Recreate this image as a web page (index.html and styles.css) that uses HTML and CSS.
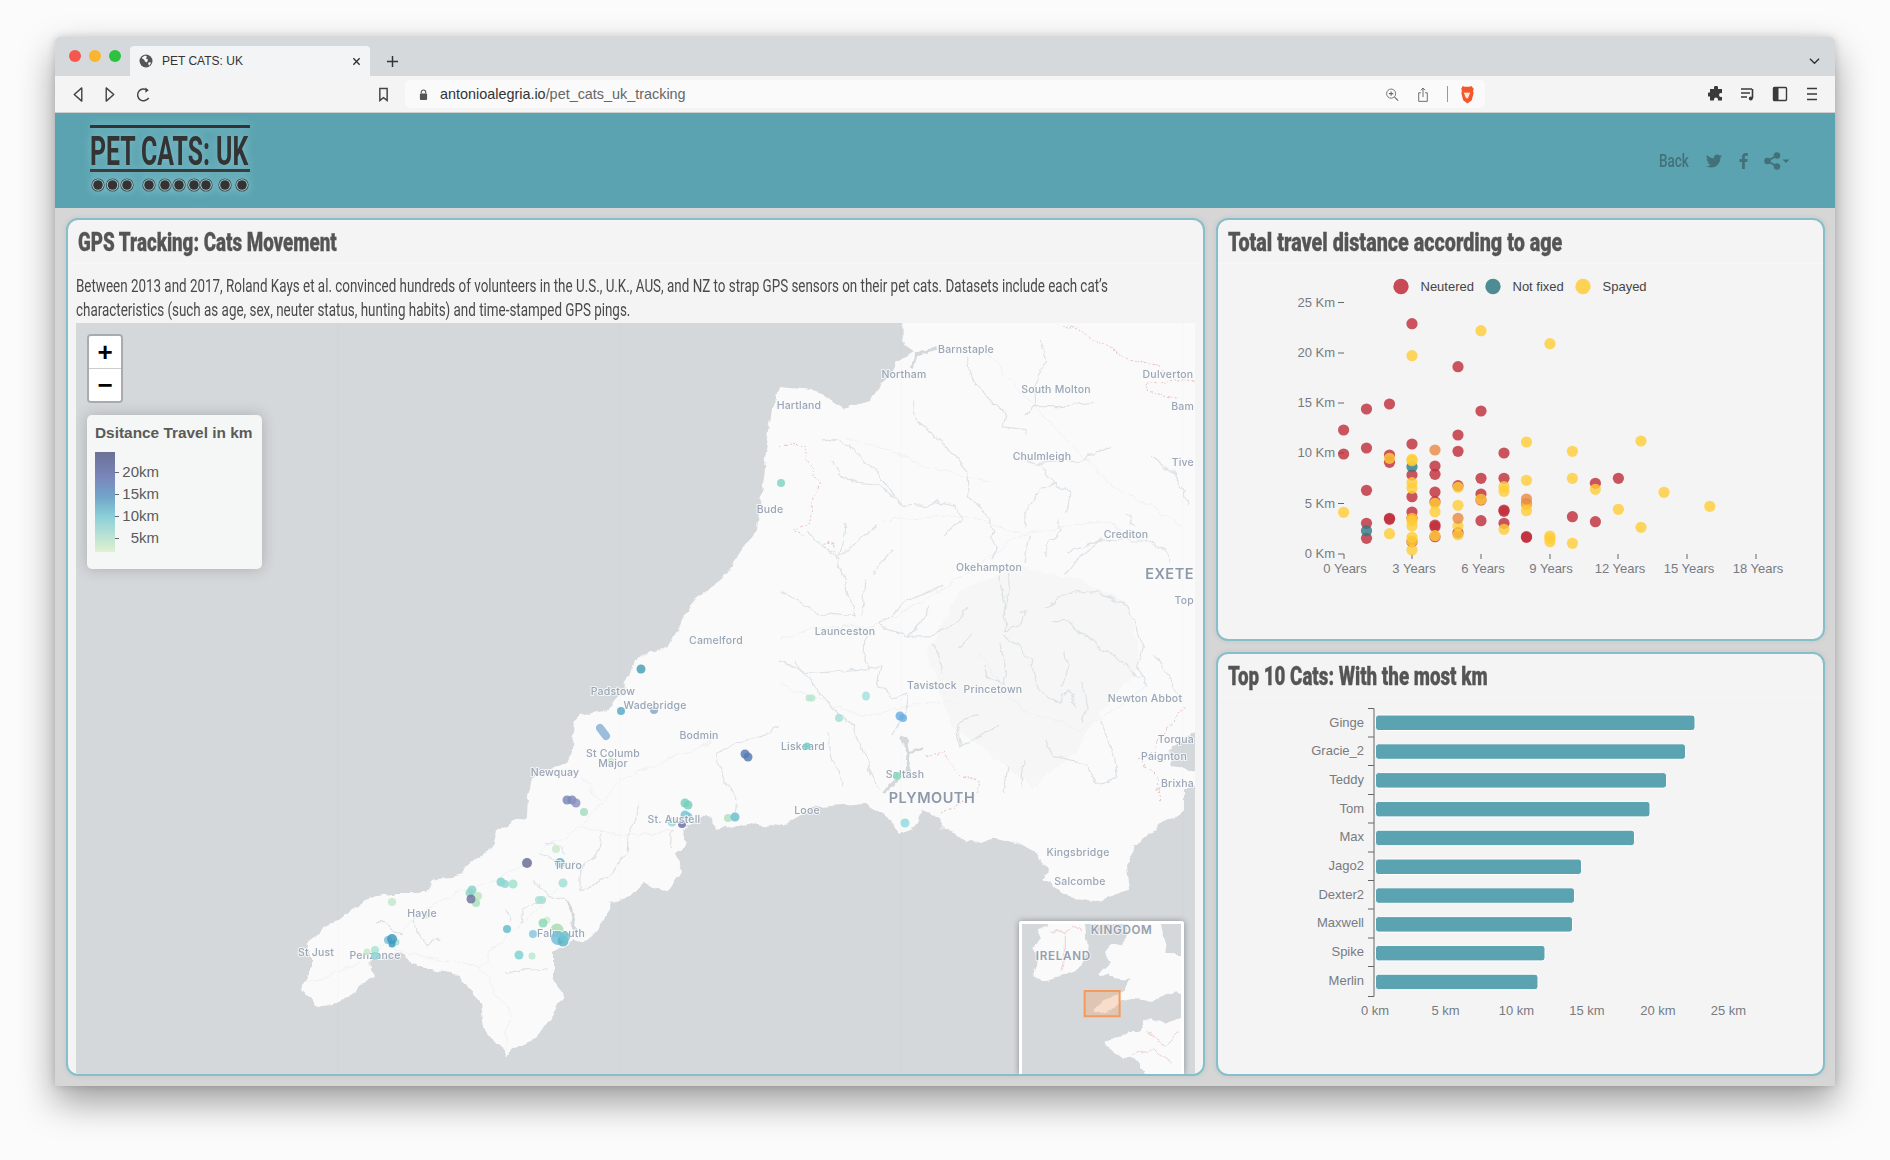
FILE: index.html
```html
<!DOCTYPE html>
<html lang="en">
<head>
    <meta charset="UTF-8">
    <title>PET CATS: UK</title>
    <link rel="stylesheet" href="styles.css">
</head>
<body>
<div class="window">
    <div class="tabbar">
        <div class="lights"><i class="red"></i><i class="amber"></i><i class="green"></i></div>
        <div class="tab">
            <svg class="globe" viewBox="0 0 14 14"><circle cx="7" cy="7" r="6.5" fill="#555"/><path d="M3 3.5l3-2 2 1-1 2 2 1-1 3-2-1-1-2-2-1zM9 9l2-1 1 1-2 3z" fill="#f3f4f5"/></svg>
            <span class="tab-title">PET CATS: UK</span>
            <svg class="tab-close" viewBox="0 0 10 10"><path d="M1.5 1.5l7 7M8.5 1.5l-7 7" stroke="#333" stroke-width="1.5"/></svg>
        </div>
        <svg class="tab-plus" viewBox="0 0 14 14"><path d="M7 1v12M1 7h12" stroke="#333" stroke-width="1.6"/></svg>
        <svg class="tab-list" viewBox="0 0 12 8"><path d="M1 1.5l5 5 5-5" fill="none" stroke="#333" stroke-width="1.5"/></svg>
    </div>
    <div class="toolbar">
        <div class="nav-btns">
            <svg viewBox="0 0 12 18"><path d="M10 2L2 9l8 7z" fill="none" stroke="#444" stroke-width="1.5" stroke-linejoin="round"/></svg>
            <svg viewBox="0 0 12 18"><path d="M2 2l8 7-8 7z" fill="none" stroke="#444" stroke-width="1.5" stroke-linejoin="round"/></svg>
            <svg viewBox="0 0 16 18"><path d="M13.5 12.5A6.3 6.3 0 1 1 12 4.5" fill="none" stroke="#444" stroke-width="1.6"/><path d="M10 1.5l3.5 3-3.5 2.5z" fill="#444"/></svg>
        </div>
        <svg class="bookmark" viewBox="0 0 12 16"><path d="M2 1.5h8v13l-4-3-4 3z" fill="none" stroke="#444" stroke-width="1.6"/></svg>
        <div class="urlbar">
            <svg class="lock" viewBox="0 0 10 12"><path d="M2.5 5V3.500a2.500 2.500 0 0 1 5 0V5" fill="none" stroke="#555" stroke-width="1.2"/><rect x="1" y="5" width="8" height="7" rx="1" fill="#555"/></svg>
            <span class="url"><b>antonioalegria.io</b>/pet_cats_uk_tracking</span>
            <svg class="url-icon" viewBox="0 0 16 16"><circle cx="7" cy="7" r="5.2" fill="none" stroke="#666" stroke-width="1"/><path d="M11 11l4 4" stroke="#666" stroke-width="1.2"/><path d="M7 4.500v5M4.500 7h5" stroke="#666" stroke-width="1.2"/></svg>
            <svg class="url-icon share" viewBox="0 0 14 18"><path d="M2 7h2.500M9.500 7H12v10H2V7" fill="none" stroke="#666" stroke-width="1.1"/><path d="M7 12V1.500M4.500 4L7 1.500 9.500 4" fill="none" stroke="#666" stroke-width="1.1"/></svg>
            <span class="url-sep"></span>
            <svg class="brave" viewBox="0 0 16 20"><path d="M3.500 1l2 .8h5l2-.8 2.500 3-.6 3 .6 1.500-2 7.500-4.500 3.500-4.500-3.500-2-7.500.6-1.500-.6-3z" fill="#f1592a"/><path d="M4.500 7.500l2.300.8L8 7.500l1.200.8 2.300-.8-1.500 4-1 2.500H7l-1-2.500z" fill="#fff" opacity=".85"/></svg>
        </div>
        <div class="tool-icons">
            <svg viewBox="0 0 16 16"><path d="M6 1.500a2 2 0 0 1 4 .5v1h4v4h-1a2 2 0 0 0 0 4h1v3.500H10v-1a2 2 0 0 0-4 0v1H2v-4H1a2 2 0 0 1 0-4h1V3h4z" fill="#3a3a3a"/></svg>
            <svg viewBox="0 0 16 16"><path d="M1 3h11M1 7h9M1 11h6" stroke="#3a3a3a" stroke-width="1.4"/><path d="M12.500 3v9" stroke="#3a3a3a" stroke-width="1.6"/><circle cx="10.800" cy="12.500" r="2" fill="#3a3a3a"/></svg>
            <svg viewBox="0 0 16 16"><rect x="1.500" y="1.500" width="13" height="13" rx="1" fill="none" stroke="#3a3a3a" stroke-width="1.4"/><rect x="1.500" y="1.500" width="5" height="13" fill="#3a3a3a"/></svg>
            <svg viewBox="0 0 16 16"><path d="M3 2.500h10M3 8h10M3 13.500h10" stroke="#3a3a3a" stroke-width="1.5"/></svg>
        </div>
    </div>

    <header class="site-head">
        <div class="logo">
            <div class="logo-name"><span>PET CATS: UK</span></div>
            <svg class="logo-dots" viewBox="0 0 160 16">
                <defs>
                    <g id="paw"><circle r="6.600" fill="#39484c"/><circle r="5.800" fill="#a9cfd5"/><circle r="4.800" fill="#333"/></g>
                </defs>
                <use href="#paw" x="8" y="8"/><use href="#paw" x="22.500" y="8"/><use href="#paw" x="37" y="8"/>
                <use href="#paw" x="59" y="8"/><use href="#paw" x="75" y="8"/><use href="#paw" x="89" y="8"/><use href="#paw" x="104" y="8"/><use href="#paw" x="116" y="8"/>
                <use href="#paw" x="135" y="8"/><use href="#paw" x="152" y="8"/>
            </svg>
        </div>
        <nav class="head-nav">
            <a class="back"><span>Back</span></a>
            <svg class="twitter" viewBox="0 0 24 24"><path d="M23.954 4.569c-.885.389-1.83.654-2.825.775 1.014-.611 1.794-1.574 2.163-2.723-.951.555-2.005.959-3.127 1.184-.896-.959-2.173-1.559-3.591-1.559-2.717 0-4.92 2.203-4.92 4.917 0 .39.045.765.127 1.124C7.691 8.094 4.066 6.13 1.64 3.161c-.427.722-.666 1.561-.666 2.475 0 1.71.87 3.213 2.188 4.096-.807-.026-1.566-.248-2.228-.616v.061c0 2.385 1.693 4.374 3.946 4.827-.413.111-.849.171-1.296.171-.314 0-.615-.03-.916-.086.631 1.953 2.445 3.377 4.604 3.417-1.68 1.319-3.809 2.105-6.102 2.105-.39 0-.779-.023-1.17-.067 2.189 1.394 4.768 2.209 7.557 2.209 9.054 0 13.999-7.496 13.999-13.986 0-.209 0-.42-.015-.63.961-.689 1.8-1.56 2.46-2.548l-.047-.02z"/></svg>
            <svg class="facebook" viewBox="0 0 10 18"><path d="M6.500 18V10h2.700l.5-3.200H6.500V4.800c0-.9.3-1.600 1.600-1.600H10V.3C9.600.2 8.600 0 7.500 0 5 0 3.300 1.500 3.300 4.300v2.500H.5V10h2.800v8z"/></svg>
            <svg class="share-menu" viewBox="0 0 26 18"><circle cx="3.500" cy="9" r="3.300"/><circle cx="13" cy="3.500" r="3.300"/><circle cx="13" cy="14.500" r="3.300"/><path d="M3.500 9L13 3.500M3.500 9L13 14.500" stroke="#42717a" stroke-width="2"/><path d="M18.500 7.500h7l-3.500 3.500z"/></svg>
        </nav>
    </header>

    <main class="dash">
        <section class="card card-map">
            <h2 class="card-title"><span>GPS Tracking: Cats Movement</span></h2>
            <p class="intro">
                <span>Between 2013 and 2017, Roland Kays et al. convinced hundreds of volunteers in the U.S., U.K., AUS, and NZ to strap GPS sensors on their pet cats. Datasets include each cat’s</span>
                <span>characteristics (such as age, sex, neuter status, hunting habits) and time-stamped GPS pings.</span>
            </p>
            <div class="map">
                <svg class="map-svg" viewBox="76 323 1119 752">
                    <defs>
                        <filter id="rough" color-interpolation-filters="sRGB">
                            <feTurbulence type="fractalNoise" baseFrequency=".07" numOctaves="3" seed="4"/>
                            <feDisplacementMap in="SourceGraphic" scale="9" xChannelSelector="R" yChannelSelector="G"/>
                        </filter>
                    </defs>
                    <rect class="sea" x="76" y="323" width="1119" height="752"/>
                    <path class="land" filter="url(#rough)" d="M900 300L902 340 913 352 897 362 882 383 870 400 843 407 823 395 813 390 780 387 772 410 765 458 757 530 723 579 690 605 669 645 633 660 623 693 603 711 580 716 575 720 573 747 567 763 532 777 528 797 527 815 497 830 493 847 477 860 462 873 433 880 427 893 397 893 370 897 340 920 320 927 310 943 310 973 302 988 317 1007 337 1003 360 987 375 977 368 965 373 960 400 953 420 967 450 972 467 983 480 1003 483 1027 500 1047 507 1055 513 1050 537 1037 563 997 553 977 553 953 573 940 583 942 597 933 610 902 630 897 643 883 668 892 682 870 677 853 687 843 683 830 707 813 717 830 747 823 780 827 813 808 863 803 887 817 900 833 913 828 923 810 940 817 943 830 967 840 980 843 997 838 1013 842 1037 855 1047 870 1043 880 1070 897 1100 902 1130 890 1127 867 1133 847 1163 823 1183 810 1183 790 1215 782 1215 772 1168 766 1172 750 1190 735 1215 720 1215 300z"/>
                    <g class="seams"><path d="M338 323V1075M620 323V1075M901 323V1075M1183 323V1075"/></g>

                    <g filter="url(#rough)">
                        <g transform="translate(780 320) scale(.3333)">
                            <path class="moor" d="M540 810L720 740 900 780 1040 850 1070 960 1080 1040 960 1180 880 1300 760 1400 660 1330 520 1220 440 1000z"/>
                            <path class="road" d="M0 960L100 925 300 920 560 760 720 640 760 640 960 600 1170 700M600 1000L720 1170 900 1230 1100 1100M0 1090L250 1190 430 1150 530 1150M620 100L800 300 1000 500 1210 620M300 600L560 590 720 640M200 350L420 430 620 490"/>
                            <path class="river" d="M400 240L395 270 420 310 460 340 500 380 530 410 560 450 565 530 610 570 640 630 645 680 630 720M130 355L210 375 240 410 290 450 340 530 380 555 440 560 470 545 530 555 545 600 490 650M155 420L175 465 240 490 290 495 340 530M570 150L580 190 640 250 680 290 670 320 740 330 745 345M740 285L760 260 840 260 940 250M560 110L575 170M780 60L800 120 760 190 765 260M780 430L820 490 870 520 860 580M830 490L780 510 735 580 735 620M840 600L840 630 795 680 795 710M745 645L735 730M860 700L950 665 1010 660 1100 660 1160 690 1170 730M955 665L890 720 860 760M700 410L780 430 900 420 960 395 990 385M85 640L165 710 190 770 215 860 225 890 115 880 0 810M195 610L190 670 170 710 290 620M335 690L280 760M255 780L245 880M490 795L370 850 300 920 385 945 450 945 525 910 575 855M455 855L430 900 385 945M0 1020L80 1060 180 1055 260 1050 300 1035 290 1090 340 1130 380 1120 370 1190 345 1240M258 940L255 1030 270 1050M720 875L740 870 720 910 680 930 670 880 660 770M690 760L670 870M795 860L850 825 950 815 1040 860 1060 900 1090 980 1075 1040 1100 1100M820 905L860 905 940 970 1000 1005 1080 1070M675 940L750 1020 775 1110 840 1150 860 1110 890 1160M855 990L860 1050 845 1100M905 1085L925 1160 900 1210M660 970L675 1040 670 1090M612 1035L620 1065 675 1090M580 935L540 990M460 970L490 1040 480 1060M1040 580L1060 620M1110 405L1180 460 1210 510 1225 560M530 1240L540 1280 660 1215M545 1280L530 1210 590 1190M795 1260L820 1310 920 1330 950 1390 1010 1380 1000 1300 960 1200M40 1020L130 1130 220 1220 270 1350 300 1410M140 1240L160 1330 190 1400M680 1340L670 1420M730 1320L720 1400M1120 1000L1200 1130"/>
                            <path class="river-wide" d="M470 85L410 105 400 140M360 1250L390 1300 430 1280M390 1300L385 1350 310 1420"/>
                            <path class="border" d="M850 10L960 70 1060 130 1115 135 1240 180M1240 180L1100 190 1095 220 1200 235M0 380L75 375 80 420 120 490 100 530 85 610 40 630 80 650M130 670L160 665 165 700 130 680M1215 1160L1120 1280 1080 1320 1130 1370 1140 1450M440 1310L490 1300 530 1360 600 1390 590 1420 520 1460 480 1480"/>
                        </g>
                        <g transform="translate(280 720) scale(.3333)">
                            <path class="road" d="M70 790L220 740 360 640 470 545 560 510 680 465 830 360 900 320 1020 180 1200 100 1300 60M350 690L480 720 600 745 650 680 780 560 830 500M600 745L690 880 680 990M900 320L1040 350 1180 330M900 170L960 240"/>
                            <path class="river" d="M290 605L320 605 365 650M405 590L410 630 440 675 485 660M800 370L840 375 860 400M780 400L820 420 905 440M970 330L960 390 915 430 900 470 900 510M1045 350L1040 400 990 470 900 510M1080 250L1050 330 1040 400M760 485L810 525 860 545M720 610L730 565 800 535M675 570L690 600M1365 230L1360 280M1365 230L1335 180 1310 100 1400 60 1500 20M1180 330L1170 380M680 760L740 745 800 750"/>
                            <path class="river-wide" d="M860 545L885 590 880 630"/>
                        </g>
                    </g>

                    <g class="dots">
                        <path d="M600 728L606 736" stroke="#8bb3d6" stroke-width="8" stroke-linecap="round" fill="none"/>
                        <circle cx="781" cy="483" r="4" fill="#84d4c4"/>
                        <circle cx="641" cy="669" r="4.500" fill="#4aa0b8"/>
                        <circle cx="621" cy="711" r="4" fill="#5aacc8"/>
                        <circle cx="654" cy="710" r="4" fill="#88a8cc"/>
                        <circle cx="611" cy="762" r="4" fill="#c8e6c8"/>
                        <circle cx="745" cy="754" r="4.500" fill="#5b7cb4"/><circle cx="748" cy="757" r="4.500" fill="#5b7cb4"/>
                        <circle cx="567" cy="800" r="4.500" fill="#7d8ab8"/><circle cx="572" cy="800" r="4.500" fill="#7d8ab8"/><circle cx="576" cy="803" r="4.500" fill="#8d92c4"/>
                        <circle cx="584" cy="812" r="4" fill="#a5dcc4"/>
                        <circle cx="685" cy="803" r="4.500" fill="#79d0c0"/><circle cx="688" cy="805" r="4.500" fill="#79d0c0"/>
                        <circle cx="685" cy="815" r="4.500" fill="#78c4d8"/><circle cx="688" cy="817" r="4.500" fill="#78c4d8"/>
                        <circle cx="672" cy="822" r="4.500" fill="#9ad8d8"/>
                        <circle cx="682" cy="824" r="4" fill="#6f72a8"/>
                        <circle cx="728" cy="818" r="4" fill="#b0e0c0"/><circle cx="735" cy="817" r="4.500" fill="#6cc0d0"/>
                        <circle cx="556" cy="849" r="4" fill="#cbe9cb"/>
                        <circle cx="527" cy="863" r="5" fill="#6a6f98"/>
                        <circle cx="560" cy="863" r="5" fill="#5eb8d4"/>
                        <circle cx="563" cy="883" r="4.500" fill="#a5dfd8"/>
                        <circle cx="501" cy="882" r="4.500" fill="#82d2cc"/><circle cx="505" cy="884" r="4" fill="#90d8d0"/><circle cx="513" cy="884" r="4.500" fill="#a5e0d0"/>
                        <circle cx="472" cy="890" r="4.500" fill="#8ad2d0"/><circle cx="470" cy="893" r="4.500" fill="#90d4c8"/><circle cx="478" cy="896" r="4" fill="#c0e6c0"/><circle cx="476" cy="903" r="4" fill="#a8e0c0"/><circle cx="471" cy="899" r="4.500" fill="#72749e"/>
                        <circle cx="539" cy="900" r="4" fill="#a8e0d4"/><circle cx="542" cy="900" r="4" fill="#a8e0d4"/>
                        <circle cx="392" cy="902" r="4" fill="#c4e8c8"/>
                        <circle cx="427" cy="915" r="3.500" fill="#c8e8c8"/>
                        <circle cx="547" cy="920" r="3.500" fill="#cfeecf"/><circle cx="543" cy="923" r="4.500" fill="#8fd8b8"/>
                        <circle cx="507" cy="929" r="4" fill="#68bccc"/>
                        <circle cx="533" cy="934" r="4" fill="#86c8e0"/>
                        <circle cx="557" cy="930" r="6.500" fill="#a8dcb0"/>
                    </g>

                    <g class="places">
                        <text x="966" y="353">Barnstaple</text><text x="904" y="378">Northam</text><text x="1056" y="393">South Molton</text><text x="1168" y="378">Dulverton</text><text class="edge" x="1194" y="410">Bam</text>
                        <text x="799" y="409">Hartland</text><text x="770" y="513">Bude</text><text x="1042" y="460">Chulmleigh</text><text class="edge" x="1194" y="466">Tive</text><text x="1126" y="538">Crediton</text>
                        <text x="989" y="571">Okehampton</text><text x="845" y="635">Launceston</text><text x="716" y="644">Camelford</text><text x="932" y="689">Tavistock</text><text x="993" y="693">Princetown</text>
                        <text x="1145" y="702">Newton Abbot</text><text class="edge" x="1194" y="743">Torqua</text><text x="1164" y="760">Paignton</text><text class="edge" x="1194" y="787">Brixha</text><text class="edge" x="1194" y="604">Top</text>
                        <text x="803" y="750">Liskeard</text><text x="905" y="778">Saltash</text><text x="807" y="814">Looe</text><text x="1078" y="856">Kingsbridge</text><text x="1080" y="885">Salcombe</text>
                        <text x="613" y="695">Padstow</text><text x="655" y="709">Wadebridge</text><text x="699" y="739">Bodmin</text><text x="613" y="757">St Columb</text><text x="613" y="767">Major</text>
                        <text x="555" y="776">Newquay</text><text x="674" y="823">St. Austell</text><text x="568" y="869">Truro</text><text x="422" y="917">Hayle</text><text x="561" y="937">Falmouth</text><text x="316" y="956">St Just</text><text x="375" y="959">Penzance</text>
                        <text class="city edge" x="1194" y="579">EXETE</text><text class="city" x="932" y="803">PLYMOUTH</text>
                    </g>

                    <g class="dots">
                        <circle cx="558" cy="938" r="7" fill="#70c0d8"/><circle cx="563" cy="941" r="5.500" fill="#5fb4c8"/><circle cx="565" cy="937" r="5" fill="#70c4d0"/>
                        <circle cx="388" cy="940" r="4" fill="#80c0d8"/><circle cx="396" cy="942" r="3.500" fill="#a0e0d0"/><circle cx="392" cy="944" r="3.500" fill="#3f9ac0"/><circle cx="392" cy="939" r="5" fill="#3f9ac0"/>
                        <circle cx="519" cy="955" r="4.500" fill="#7fd4d4"/>
                        <circle cx="532" cy="956" r="3.500" fill="#b8e8d0"/>
                        <circle cx="367" cy="952" r="3.500" fill="#c8e8c8"/><circle cx="375" cy="950" r="4" fill="#a8e4d4"/><circle cx="375" cy="956" r="4" fill="#90d4d8"/>
                        <circle cx="809" cy="698" r="3.500" fill="#b8e8d0"/><circle cx="812" cy="698" r="3.500" fill="#b8e8d0"/>
                        <ellipse cx="866" cy="696" rx="4" ry="4.500" fill="#a5e0e0"/>
                        <circle cx="839" cy="718" r="4" fill="#a5dfd8"/>
                        <circle cx="900" cy="716" r="4.500" fill="#6fb0e0"/><circle cx="903" cy="718" r="4" fill="#6fb0e0"/>
                        <circle cx="807" cy="746" r="3.500" fill="#70d0c8"/>
                        <circle cx="897" cy="776" r="4" fill="#88dcc0"/>
                        <circle cx="905" cy="823" r="4.500" fill="#90dce0"/>
                    </g>
                </svg>

                <div class="zoom-ctl"><a>+</a><a>−</a></div>

                <div class="map-legend">
                    <div class="map-legend-title">Dsitance Travel in km</div>
                    <div class="map-legend-body">
                        <div class="ramp"></div>
                        <ul class="ramp-labels">
                            <li>20km</li><li>15km</li><li>10km</li><li>5km</li>
                        </ul>
                    </div>
                </div>

                <div class="inset">
                    <svg viewBox="1022 925 159 151">
                        <rect class="sea" x="1022" y="925" width="159" height="151"/>
                        <g filter="url(#rough)">
                            <g transform="translate(780 800) scale(.3333)">
                                <path class="land" d="M1040 360L1140 360 1150 420 1160 465 1230 465 1230 575 1160 590 1110 605 1060 600 1025 605 1000 630 960 640 940 638 970 610 1020 575 1050 545 1000 540 955 525 990 490 975 460 990 440 1025 440 1040 410z"/>
                                <path class="land" d="M770 395L830 360 915 360 920 440 915 490 880 520 830 540 790 550 760 525 770 480 760 450 780 420z"/>
                                <path class="land" d="M970 725L1030 710 1090 700 1085 665 1110 660 1150 675 1230 640 1230 850 1120 850 1060 780 1000 760z"/>
                                <path class="border thin" d="M810 390L850 400 880 385 905 400M850 400L850 470 840 520M1100 700L1160 740 1200 700M1060 770L1120 750 1180 790"/>
                            </g>
                        </g>
                        <g transform="translate(780 800) scale(.3333)">
                            <text class="inset-label" x="850" y="482">IRELAND</text>
                            <text class="inset-label" x="1025" y="405">KINGDOM</text>
                            <rect class="view-box" x="914" y="576" width="105" height="76"/>
                        </g>
                    </svg>
                </div>
            </div>
        </section>

        <div class="side">
            <section class="card">
                <h2 class="card-title title-long"><span>Total travel distance according to age</span></h2>
                <svg class="chart" viewBox="1218 264 605 375">
                    <g class="legend">
                        <circle class="n" cx="1401" cy="286.500" r="7.700"/><text x="1420.500" y="291">Neutered</text>
                        <circle class="f" cx="1493" cy="286.500" r="7.700"/><text x="1512.500" y="291">Not fixed</text>
                        <circle class="s" cx="1583" cy="286.500" r="7.700"/><text x="1602.500" y="291">Spayed</text>
                    </g>
                    <g class="y-labels">
                        <text x="1335" y="307">25 Km</text><text x="1335" y="357">20 Km</text><text x="1335" y="407">15 Km</text>
                        <text x="1335" y="457">10 Km</text><text x="1335" y="508">5 Km</text><text x="1335" y="558">0 Km</text>
                    </g>
                    <path class="ticks" d="M1338 302.500H1344M1338 353H1344M1338 403H1344M1338 453H1344M1338 503.500H1344M1338 554H1344V559M1412 554V559M1481 554V559M1550 554V559M1618 554V559M1687 554V559M1756 554V559"/>
                    <g class="x-labels">
                        <text x="1345" y="572.500">0 Years</text><text x="1414" y="572.500">3 Years</text><text x="1483" y="572.500">6 Years</text><text x="1551" y="572.500">9 Years</text>
                        <text x="1620" y="572.500">12 Years</text><text x="1689" y="572.500">15 Years</text><text x="1758" y="572.500">18 Years</text>
                    </g>
                    <g class="pts n">
                        <circle cx="1343.600" cy="430"/><circle cx="1343.600" cy="454"/>
                        <circle cx="1366.500" cy="409"/><circle cx="1366.500" cy="448"/><circle cx="1366.500" cy="490.300"/><circle cx="1366.500" cy="523.300"/><circle cx="1366.500" cy="538.300"/>
                        <circle cx="1389.500" cy="404"/><circle cx="1389.500" cy="455"/><circle cx="1389.500" cy="462.300"/><circle cx="1389.500" cy="518.300"/><circle cx="1389.500" cy="519.300"/>
                        <circle cx="1412" cy="323.700"/><circle cx="1412" cy="444"/><circle cx="1412" cy="475"/><circle cx="1412" cy="496.700"/><circle cx="1412" cy="512"/><circle cx="1412" cy="518.300"/><circle cx="1412" cy="541.700"/>
                        <circle cx="1435" cy="466"/><circle cx="1435" cy="474.300"/><circle cx="1435" cy="492"/><circle cx="1435" cy="501.700"/><circle cx="1435" cy="525"/><circle cx="1435" cy="526.700"/><circle cx="1435" cy="536.700"/>
                        <circle cx="1458" cy="366.700"/><circle cx="1458" cy="435"/><circle cx="1458" cy="451.300"/><circle cx="1458" cy="485.700"/><circle cx="1458" cy="532.700"/>
                        <circle cx="1481" cy="411"/><circle cx="1481" cy="478.300"/><circle cx="1481" cy="494"/><circle cx="1481" cy="500"/><circle cx="1481" cy="520.700"/>
                        <circle cx="1504" cy="453"/><circle cx="1504" cy="478.300"/><circle cx="1504" cy="510"/><circle cx="1504" cy="511.300"/><circle cx="1504" cy="523.300"/>
                        <circle cx="1526.500" cy="504"/><circle cx="1526.500" cy="536.700"/><circle cx="1526.500" cy="537.300"/>
                        <circle cx="1572.400" cy="516.700"/>
                        <circle cx="1595.400" cy="483.300"/><circle cx="1595.400" cy="521.700"/>
                        <circle cx="1618.400" cy="478.300"/>
                    </g>
                    <g class="pts f">
                        <circle cx="1366.500" cy="530.700"/><circle cx="1412" cy="466.700"/>
                    </g>
                    <g class="pts s">
                        <circle cx="1343.600" cy="512.300"/>
                        <circle cx="1389.500" cy="458.300"/><circle cx="1389.500" cy="533.700"/>
                        <circle cx="1412" cy="355.700"/><circle cx="1412" cy="459.300"/><circle cx="1412" cy="460.700"/><circle cx="1412" cy="482.700"/><circle cx="1412" cy="488.300"/><circle cx="1412" cy="518.300"/><circle cx="1412" cy="520.700"/><circle cx="1412" cy="526"/><circle cx="1412" cy="537.300"/><circle cx="1412" cy="541"/><circle cx="1412" cy="550"/>
                        <circle cx="1435" cy="503.300"/><circle cx="1435" cy="511.700"/><circle cx="1435" cy="535.700"/>
                        <circle cx="1458" cy="487.300"/><circle cx="1458" cy="505.300"/><circle cx="1458" cy="526"/><circle cx="1458" cy="534.700"/>
                        <circle cx="1481" cy="330.700"/><circle cx="1481" cy="499.300"/>
                        <circle cx="1504" cy="486.700"/><circle cx="1504" cy="491.300"/><circle cx="1504" cy="529.300"/>
                        <circle cx="1526.500" cy="442"/><circle cx="1526.500" cy="480.300"/><circle cx="1526.500" cy="505"/><circle cx="1526.500" cy="510.700"/>
                        <circle cx="1549.900" cy="343.700"/><circle cx="1549.900" cy="536"/><circle cx="1549.900" cy="538.300"/><circle cx="1549.900" cy="541.700"/>
                        <circle cx="1572.400" cy="451.300"/><circle cx="1572.400" cy="478.300"/><circle cx="1572.400" cy="543.300"/>
                        <circle cx="1595.400" cy="489.300"/>
                        <circle cx="1618.400" cy="509.300"/>
                        <circle cx="1641" cy="441"/><circle cx="1641" cy="527.300"/>
                        <circle cx="1664" cy="492.300"/>
                        <circle cx="1709.800" cy="506.300"/>
                    </g>
                    <g class="pts o">
                        <circle cx="1435" cy="450"/><circle cx="1458" cy="518.300"/><circle cx="1526.500" cy="499"/>
                    </g>
                </svg>
            </section>

            <section class="card">
                <h2 class="card-title"><span>Top 10 Cats: With the most km</span></h2>
                <svg class="chart" viewBox="1218 698 605 376">
                    <path class="ticks" d="M1368 708.500H1374V996.500H1368M1368 737H1374M1368 765.500H1374M1368 794.500H1374M1368 823H1374M1368 852H1374M1368 880.500H1374M1368 909H1374M1368 938H1374M1368 966.500H1374"/>
                    <g class="bar-labels">
                        <text x="1364" y="727">Ginge</text><text x="1364" y="755">Gracie_2</text><text x="1364" y="784">Teddy</text><text x="1364" y="813">Tom</text><text x="1364" y="841">Max</text>
                        <text x="1364" y="870">Jago2</text><text x="1364" y="899">Dexter2</text><text x="1364" y="927">Maxwell</text><text x="1364" y="956">Spike</text><text x="1364" y="985">Merlin</text>
                    </g>
                    <g class="bars">
                        <rect x="1375.500" y="715" width="319.500" height="15.500"/>
                        <rect x="1375.500" y="743.800" width="310" height="15.500"/>
                        <rect x="1375.500" y="772.600" width="291" height="15.500"/>
                        <rect x="1375.500" y="801.400" width="274.500" height="15.500"/>
                        <rect x="1375.500" y="830.200" width="259" height="15.500"/>
                        <rect x="1375.500" y="859" width="206" height="15.500"/>
                        <rect x="1375.500" y="887.800" width="199" height="15.500"/>
                        <rect x="1375.500" y="916.600" width="197" height="15.500"/>
                        <rect x="1375.500" y="945.400" width="169.500" height="15.500"/>
                        <rect x="1375.500" y="974.200" width="162.500" height="15.500"/>
                    </g>
                    <g class="bar-axis">
                        <text x="1375" y="1015">0 km</text><text x="1445.500" y="1015">5 km</text><text x="1516.500" y="1015">10 km</text>
                        <text x="1587" y="1015">15 km</text><text x="1658" y="1015">20 km</text><text x="1728.500" y="1015">25 km</text>
                    </g>
                </svg>
            </section>
        </div>
    </main>
</div>
</body>
</html>
```

FILE: styles.css
```css
body{
    margin:0;
    padding:37px 55px 74px;
    background-color:#fbfbfb;
    font-family:"Liberation Sans", sans-serif;
}
.window{
    width:1780px;
    height:1049px;
    display:flex;
    flex-direction:column;
    overflow:hidden;
    border-radius:6px 6px 0 0;
    box-shadow:0 16px 36px rgba(0,0,0,.38), 0 0 8px rgba(0,0,0,.15);
    background-color:#dedede;
}

/* browser chrome */
.tabbar{
    height:39px;
    display:flex;
    align-items:flex-end;
    background-color:#d5d9dc;
    position:relative;
}
.lights{
    width:75px;
    height:39px;
    display:flex;
    gap:8px;
    padding:13px 0 0 14px;
    box-sizing:border-box;
}
.lights i{
    width:12px;
    height:12px;
    border-radius:50%;
}
.lights .red{background-color:#f5574f;}
.lights .amber{background-color:#f9b52e;}
.lights .green{background-color:#2cc13f;}
.tab{
    width:240px;
    height:30px;
    display:flex;
    align-items:center;
    box-sizing:border-box;
    padding:0 9px;
    background-color:#f3f4f5;
    border-radius:4px 4px 0 0;
}
.globe{
    width:14px;
    height:14px;
    margin-right:9px;
}
.tab-title{
    flex:1;
    font-size:12px;
    color:#333;
}
.tab-close{
    width:9px;
    height:9px;
}
.tab-plus{
    width:13px;
    height:13px;
    margin:0 0 8px 16px;
}
.tab-list{
    width:11px;
    height:8px;
    position:absolute;
    right:15px;
    top:20px;
}
.toolbar{
    height:37px;
    box-sizing:border-box;
    display:flex;
    align-items:center;
    background-color:#f4f4f4;
    border-bottom:1px solid #cfcfcf;
    padding-left:17px;
}
.nav-btns{
    display:flex;
    align-items:center;
    gap:20px;
    width:306px;
}
.nav-btns svg{
    width:12px;
    height:17px;
}
.nav-btns svg:last-child{
    width:15px;
}
.bookmark{
    width:11px;
    height:15px;
    margin-right:16px;
}
.urlbar{
    width:1080px;
    height:28px;
    display:flex;
    align-items:center;
    box-sizing:border-box;
    padding-left:14px;
    background-color:#fafafa;
    border-radius:5px;
}
.lock{
    width:9px;
    height:11px;
    margin-right:12px;
}
.url{
    flex:1;
    font-size:14.4px;
    color:#666;
    white-space:nowrap;
}
.url b{
    font-weight:400;
    color:#333;
}
.url-icon{
    width:14px;
    height:15px;
    margin-right:18px;
}
.url-icon.share{
    width:12px;
    height:17px;
}
.url-sep{
    width:1px;
    height:16px;
    background-color:#999;
    margin-right:11px;
}
.brave{
    width:16px;
    height:19px;
    margin-right:10px;
}
.tool-icons{
    display:flex;
    gap:16px;
    margin-left:223px;
}
.tool-icons svg{
    width:16px;
    height:16px;
}

/* site header */
.site-head{
    height:95px;
    flex:none;
    box-sizing:border-box;
    display:flex;
    justify-content:space-between;
    align-items:center;
    background-color:#5ba3b0;
    padding:0 45px 0 35px;
}
.logo{
    width:160px;
    margin-top:-3px;
    filter:drop-shadow(0 0 5px rgba(170,225,235,.55));
}
.logo-name{
    border-top:3px solid #333;
    border-bottom:3px solid #3c3c3c;
    height:36px;
    padding-top:5px;
    white-space:nowrap;
}
.logo-name span{
    display:inline-block;
    font-family:Roboto, sans-serif;
    font-weight:700;
    font-size:41px;
    line-height:36px;
    color:#333;
    transform:scaleX(.605);
    transform-origin:left;
}
.logo-dots{
    display:block;
    width:160px;
    height:16px;
    margin-top:5px;
}
.head-nav{
    display:flex;
    align-items:center;
    fill:#42717a;
}
.back{
    width:47px;
    font-family:Roboto, sans-serif;
    font-weight:500;
    font-size:19px;
    color:#42717a;
}
.back span{
    display:inline-block;
    transform:scaleX(.71);
    transform-origin:left;
}
.twitter{
    width:16px;
    height:16px;
    margin-right:17px;
}
.facebook{
    width:9px;
    height:16px;
    margin-right:16px;
}
.share-menu{
    width:26px;
    height:18px;
}

/* dashboard */
.dash{
    flex:1;
    display:grid;
    grid-template-columns:1139px 609px;
    gap:11px;
    padding:10px 10px 10px 11px;
    min-height:0;
    background-color:#d6d6d6;
}
.side{
    display:grid;
    grid-template-rows:423px 424px;
    gap:11px;
}
.card{
    display:flex;
    flex-direction:column;
    box-sizing:border-box;
    border:2px solid #85bfca;
    border-radius:12px;
    background-color:#f4f4f4;
    overflow:hidden;
    box-shadow:0 0 6px rgba(0,0,0,.08);
}
.card-title{
    flex:none;
    height:44px;
    box-sizing:border-box;
    margin:0;
    padding-left:10px;
    border-bottom:1px solid #f7f7f7;
    white-space:nowrap;
}
.card-title span{
    display:inline-block;
    font-family:Roboto, sans-serif;
    font-weight:900;
    font-size:25px;
    line-height:46px;
    color:#555;
    -webkit-text-stroke:.3px #555;
    transform:scaleX(.75);
    transform-origin:left;
}
.title-long span{
    transform:scaleX(.79);
}
.intro{
    flex:none;
    height:59px;
    box-sizing:border-box;
    margin:0;
    padding:10px 0 0 8px;
    font-family:Roboto, sans-serif;
    font-size:18px;
    line-height:24px;
    color:#4a4a4a;
    white-space:nowrap;
}
.intro span{
    display:block;
    transform:scaleX(.745);
    transform-origin:left;
}

/* map */
.map{
    position:relative;
    flex:1;
    margin:0 8px;
    overflow:hidden;
}
.map-svg{
    display:block;
    width:1119px;
    height:752px;
}
.sea{fill:#d4d8db;}
.land{fill:#fafafa;}
.seams path{
    fill:none;
    stroke:#000;
    stroke-opacity:.02;
}
.moor{fill:#f5f6f5;}
.road{
    fill:none;
    stroke:#eff0f1;
    stroke-width:1;
    vector-effect:non-scaling-stroke;
}
.river{
    fill:none;
    stroke:#dde2e6;
    stroke-width:1.2;
    vector-effect:non-scaling-stroke;
}
.river-wide{
    fill:none;
    stroke:#d4d8db;
    stroke-width:3;
    vector-effect:non-scaling-stroke;
}
.border{
    fill:none;
    stroke:#e8bfc0;
    stroke-width:1;
    stroke-dasharray:2 2;
    vector-effect:non-scaling-stroke;
}
.border.thin{
    stroke-dasharray:none;
    opacity:.7;
}
.dots circle, .dots ellipse, .dots path{
    opacity:.85;
}
.places text{
    font-family:Inter, sans-serif;
    font-size:10.5px;
    font-weight:500;
    letter-spacing:.2px;
    text-anchor:middle;
    fill:#9aa6b7;
    stroke:#fafafa;
    stroke-width:2px;
    stroke-opacity:.8;
    paint-order:stroke;
}
.places .edge{
    text-anchor:end;
}
.places .city{
    font-size:14.5px;
    font-weight:600;
    letter-spacing:.5px;
    fill:#8d99aa;
}
.zoom-ctl{
    position:absolute;
    left:11px;
    top:11px;
    display:flex;
    flex-direction:column;
    width:32px;
    border:2px solid rgba(0,0,0,.2);
    border-radius:4px;
    overflow:hidden;
    background-clip:padding-box;
}
.zoom-ctl a{
    height:32px;
    background-color:#fff;
    text-align:center;
    font:bold 26px/32px "Liberation Sans", sans-serif;
    color:#000;
}
.zoom-ctl a:first-child{
    border-bottom:1px solid #ccc;
}
.map-legend{
    position:absolute;
    left:11px;
    top:92px;
    width:175px;
    height:154px;
    box-sizing:border-box;
    padding:9px 8px;
    border-radius:5px;
    background-color:#f5f7f6;
    box-shadow:0 0 15px rgba(0,0,0,.2);
    color:#5a5a5a;
}
.map-legend-title{
    font-size:15.4px;
    font-weight:700;
    line-height:17px;
    white-space:nowrap;
}
.map-legend-body{
    display:flex;
    margin-top:11px;
}
.ramp{
    width:20px;
    height:100px;
    background:linear-gradient(#6b7294, #7a86bb 25%, #72a5c9 45%, #8cd0d8 65%, #e0f1d0);
}
.ramp-labels{
    list-style:none;
    margin:9px 0 0;
    padding:0;
    width:44px;
    font-size:15px;
    line-height:22px;
    text-align:right;
}
.ramp-labels li{
    position:relative;
}
.ramp-labels li::before{
    content:"";
    position:absolute;
    left:0;
    top:11px;
    width:4px;
    height:1px;
    background-color:#666;
}
.inset{
    position:absolute;
    right:11px;
    bottom:-1px;
    width:165px;
    height:154px;
    box-sizing:border-box;
    border:3px solid #fff;
    border-bottom:0;
    border-radius:3px 3px 0 0;
    box-shadow:0 0 6px rgba(0,0,0,.35);
}
.inset svg{
    display:block;
    width:159px;
    height:151px;
}
.inset-label{
    font-family:Inter, sans-serif;
    font-size:35px;
    font-weight:600;
    letter-spacing:2px;
    text-anchor:middle;
    fill:#94a0ae;
    stroke:#fafafa;
    stroke-width:6px;
    stroke-opacity:.7;
    paint-order:stroke;
}
.view-box{
    fill:#f59a5c;
    fill-opacity:.3;
    stroke:#f59a5c;
    stroke-width:2;
    vector-effect:non-scaling-stroke;
}

/* charts */
.chart{
    flex:1;
    display:block;
    width:605px;
    min-height:0;
}
.chart text{
    font-family:"Liberation Sans", sans-serif;
    font-size:13px;
    fill:#777b82;
}
.chart .legend text{
    fill:#444;
}
.n{fill:#bf2c38;}
.f{fill:#2f7884;}
.s{fill:#ffcd36;}
.o{fill:#e88a42;}
.legend circle{
    opacity:.85;
}
.pts circle{
    r:5.6px;
    opacity:.8;
}
.y-labels text, .bar-labels text{
    text-anchor:end;
}
.x-labels text, .bar-axis text{
    text-anchor:middle;
}
.ticks{
    fill:none;
    stroke:#666;
    stroke-width:1;
}
.bars rect{
    fill:#5ba3b0;
    stroke:#fff;
    stroke-width:1;
    rx:3px;
}
```
